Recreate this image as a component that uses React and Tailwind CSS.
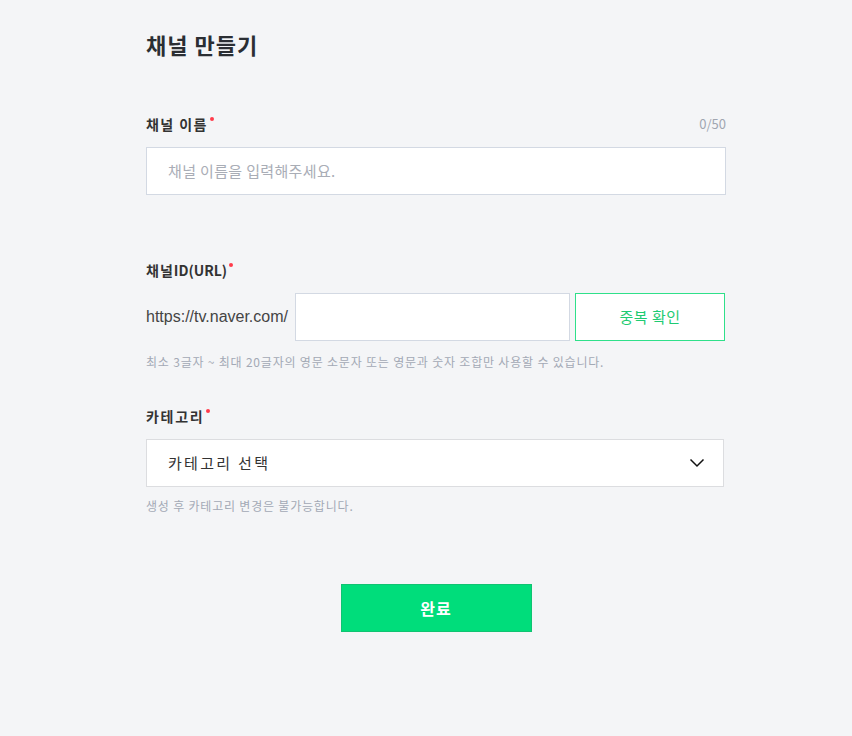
// App.jsx — "채널 만들기" create-channel form.

const FONT = { fontFamily: '"Noto Sans CJK KR", "Noto Sans", sans-serif' };

function Label({ children }) {
  return (
    <div className="relative text-[14px] leading-[20px] font-bold text-[#333]">
      {children}
      <span className="absolute -right-[6px] top-[3px] w-[4px] h-[4px] rounded-full bg-[#ff3b4b]" />
    </div>
  );
}

function Helper({ children }) {
  return <p className="text-[12px] leading-[18px] tracking-[0.8px] text-[#a3a9b5]">{children}</p>;
}

export default function App() {
  return (
    <div className="min-h-[736px] bg-[#f4f5f7]" style={FONT}>
      <div className="w-[580px] ml-[146px] pt-[29px]">
        <h1 className="text-[22px] leading-[30px] font-bold tracking-[1px] text-[#2b2e33]">채널 만들기</h1>

        {/* 채널 이름 */}
        <div className="mt-[55px] flex justify-between items-center">
          <Label>
            <span className="tracking-[1.4px]">채널 이름</span>
          </Label>
          <span className="text-[13px] leading-[20px] text-[#a0a6b1]">0/50</span>
        </div>
        <div className="mt-[13px] h-[48px] bg-white border border-[#d3d9e3] flex items-center pl-[21px]">
          <span className="text-[15px] tracking-[0.35px] text-[#a9adb6]">채널 이름을 입력해주세요.</span>
        </div>

        {/* 채널ID(URL) */}
        <div className="mt-[65px] flex">
          <Label>
            <span className="tracking-[1px]">채널</span>ID(URL)
          </Label>
        </div>
        <div className="mt-[13px] flex items-center h-[48px]">
          <span className="text-[16px] text-[#444] w-[149px]" style={{ fontFamily: '"Liberation Sans", Arial, sans-serif' }}>
            https://tv.naver.com/
          </span>
          <div className="w-[275px] h-[48px] bg-white border border-[#d3d9e3]" />
          <button className="ml-[5px] w-[150px] h-[48px] bg-white border border-[#2fe08a] text-[15px] tracking-[0.5px] text-[#1ecb72]">
            중복 확인
          </button>
        </div>
        <div className="mt-[12px]">
          <Helper>최소 3글자 ~ 최대 20글자의 영문 소문자 또는 영문과 숫자 조합만 사용할 수 있습니다.</Helper>
        </div>

        {/* 카테고리 */}
        <div className="mt-[35px] flex">
          <Label>
            <span className="tracking-[1.7px]">카테고리</span>
          </Label>
        </div>
        <div className="mt-[13px] w-[578px] h-[48px] bg-white border border-[#dcdde0] flex items-center justify-between pl-[21px] pr-[18px]">
          <span className="text-[15px] tracking-[2.3px] text-[#333]">카테고리 선택</span>
          <svg width="16" height="10" viewBox="0 0 16 10" fill="none">
            <path d="M1.5 1.5 L8 8 L14.5 1.5" stroke="#111" strokeWidth="1.5" />
          </svg>
        </div>
        <div className="mt-[10px]">
          <Helper>생성 후 카테고리 변경은 불가능합니다.</Helper>
        </div>

        <div className="mt-[69px] flex justify-center">
          <button className="w-[191px] h-[48px] bg-[#00dd7b] border border-[#10c372] text-white text-[16px] font-bold tracking-[1px]">
            완료
          </button>
        </div>
      </div>
    </div>
  );
}
